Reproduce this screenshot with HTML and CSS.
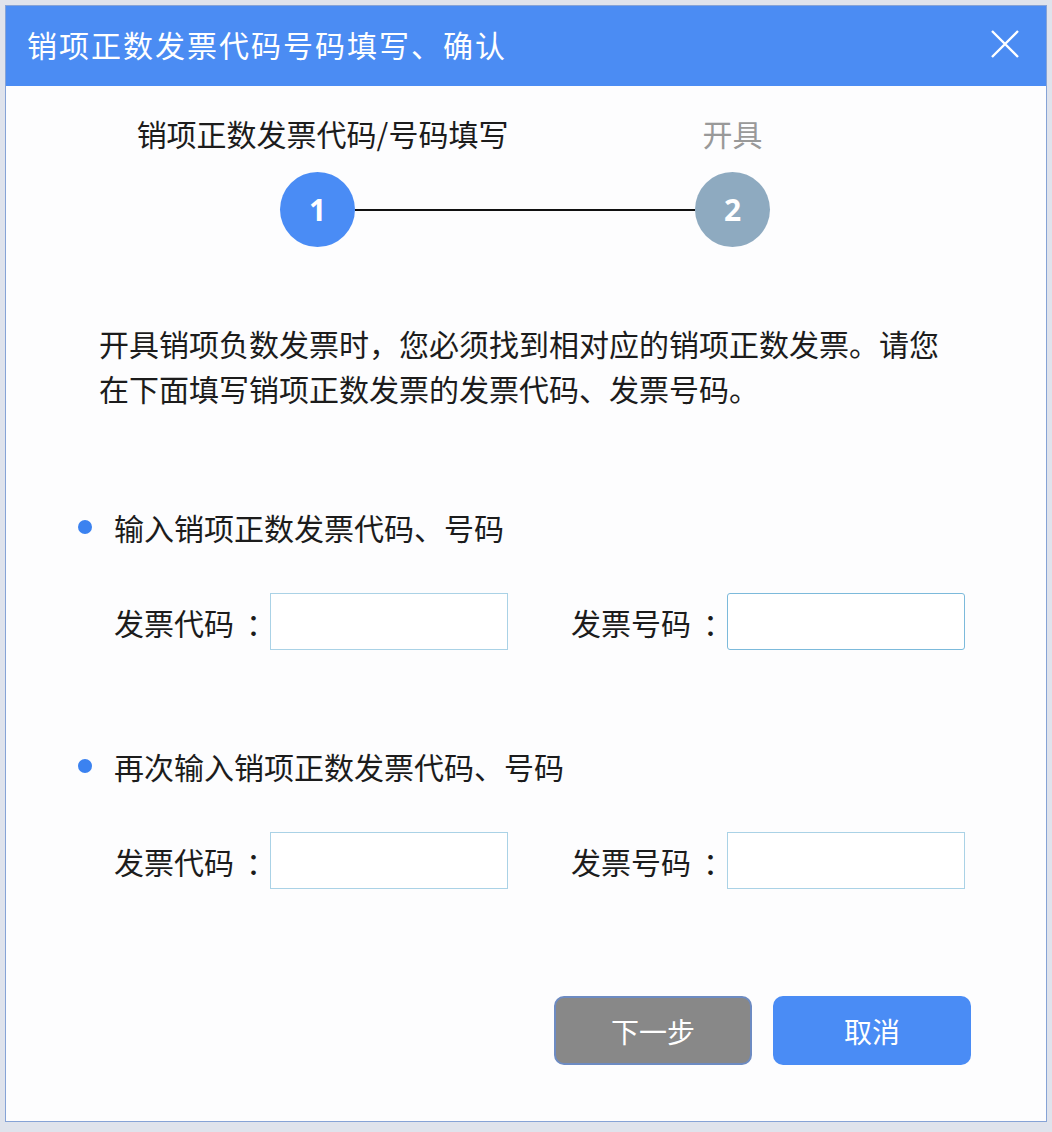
FILE: index.html
```html
<!doctype html>
<html lang="zh-CN">
<head>
    <title>销项正数发票代码号码填写、确认</title>
    <meta charset="utf-8">
    <meta name="viewport" content="width=device-width, initial-scale=1">
    <link rel="stylesheet" href="styles.css">
</head>
<body>
<div class="backdrop">
    <div class="dialog">
        <div class="dialog-header">
            <h1>销项正数发票代码号码填写、确认</h1>
            <a href="#" class="close-btn" aria-label="关闭">
                <svg width="30" height="28" viewBox="0 0 30 28">
                    <path d="M2 1 L28 27 M28 1 L2 27" stroke="#fff" stroke-width="2.4" fill="none"/>
                </svg>
            </a>
        </div>

        <div class="dialog-body">
            <!-- step indicator -->
            <div class="steps">
                <div class="step-label active">销项正数发票代码/号码填写</div>
                <div></div>
                <div class="step-label">开具</div>
                <div class="step-dot active">1</div>
                <div class="step-line"></div>
                <div class="step-dot">2</div>
            </div>

            <p class="intro">开具销项负数发票时，您必须找到相对应的销项正数发票。请您<br>在下面填写销项正数发票的发票代码、发票号码。</p>

            <div class="section">
                <h3 class="section-title">输入销项正数发票代码、号码</h3>
                <div class="field-row">
                    <div class="field">
                        <label>发票代码<span class="colon">：</span></label>
                        <input type="text" id="code1">
                    </div>
                    <div class="field">
                        <label>发票号码<span class="colon">：</span></label>
                        <input type="text" id="num1" class="focused">
                    </div>
                </div>
            </div>

            <div class="section">
                <h3 class="section-title">再次输入销项正数发票代码、号码</h3>
                <div class="field-row">
                    <div class="field">
                        <label>发票代码<span class="colon">：</span></label>
                        <input type="text" id="code2">
                    </div>
                    <div class="field">
                        <label>发票号码<span class="colon">：</span></label>
                        <input type="text" id="num2">
                    </div>
                </div>
            </div>

            <div class="actions">
                <a href="#" class="btn btn-next">下一步</a>
                <a href="#" class="btn btn-cancel">取消</a>
            </div>
        </div>
    </div>
</div>
</body>
</html>
```

FILE: styles.css
```css
html, body { height: 100%; }
body {
    margin: 0;
    padding: 0;
    font-family: "Noto Sans CJK SC", "Noto Sans", sans-serif;
    color: #1c1c1c;
    background: #dfe3ec;
}
.backdrop {
    padding: 5px;
    height: 100%;
    box-sizing: border-box;
}
.dialog {
    width: 1042px;
    height: 1117px;
    box-sizing: border-box;
    border: 1px solid #86a3d6;
    background: #fdfdfe;
    display: flex;
    flex-direction: column;
}
.dialog-header {
    height: 80px;
    flex: none;
    background: #4b8cf3;
    display: flex;
    align-items: center;
    justify-content: space-between;
    padding: 0 26px 4px 21px;
    box-sizing: border-box;
}
.dialog-header h1 {
    margin: 0;
    font-size: 30px;
    font-weight: normal;
    letter-spacing: 2px;
    color: #fff;
}
.close-btn { display: flex; }

.dialog-body {
    padding: 27px 75px 0 72px;
}

/* steps */
.steps {
    display: grid;
    grid-template-columns: 75px 340px 75px;
    row-gap: 19px;
    margin-left: 202px;
}
.step-label {
    justify-self: center;
    white-space: nowrap;
    font-size: 30px;
    line-height: 40px;
    color: #999;
}
.step-label.active { color: #1c1c1c; transform: translateX(5px); }
.step-dot {
    width: 75px;
    height: 75px;
    border-radius: 50%;
    background: #8eaac0;
    color: #fff;
    font-family: "Open Sans", "Noto Sans", sans-serif;
    font-weight: bold;
    font-size: 30px;
    display: flex;
    align-items: center;
    justify-content: center;
}
.step-dot.active { background: #4a8cf5; }
.step-line {
    align-self: center;
    height: 2px;
    background: #111;
}

.intro {
    margin: 74px 0 0 21px;
    font-size: 30px;
    line-height: 45px;
    white-space: nowrap;
}

.section { margin-top: 96px; }
.section + .section { margin-top: 96px; }
.section-title {
    margin: 0;
    font-size: 30px;
    font-weight: normal;
    line-height: 40px;
    display: flex;
    align-items: center;
}
.section-title::before {
    content: "";
    width: 14px;
    height: 14px;
    border-radius: 50%;
    background: #3b82f0;
    margin-right: 22px;
}
.field-row {
    display: flex;
    gap: 63px;
    margin: 46px 0 0 36px;
}
.field {
    display: flex;
    align-items: center;
}
.field label {
    font-size: 30px;
    margin-right: 6px;
}
.field .colon {
    display: inline-block;
    width: 30px;
    text-align: center;
    text-indent: 12px;
}
.field input {
    width: 238px;
    height: 57px;
    box-sizing: border-box;
    border: 1px solid #aad2e6;
    background: #fff;
    outline: none;
    font-size: 22px;
    padding: 0 8px;
}
.field input.focused,
.field input:focus {
    border-color: #7cbadb;
    border-radius: 3px;
}

.actions {
    display: flex;
    justify-content: flex-end;
    gap: 21px;
    margin-top: 107px;
}
.btn {
    width: 198px;
    height: 69px;
    box-sizing: border-box;
    border-radius: 10px;
    display: flex;
    align-items: center;
    justify-content: center;
    color: #fff;
    font-size: 28px;
    text-decoration: none;
}
.btn-next {
    background: #888;
    border: 2px solid #6d8bc2;
}
.btn-cancel { background: #4a8cf5; }
```
